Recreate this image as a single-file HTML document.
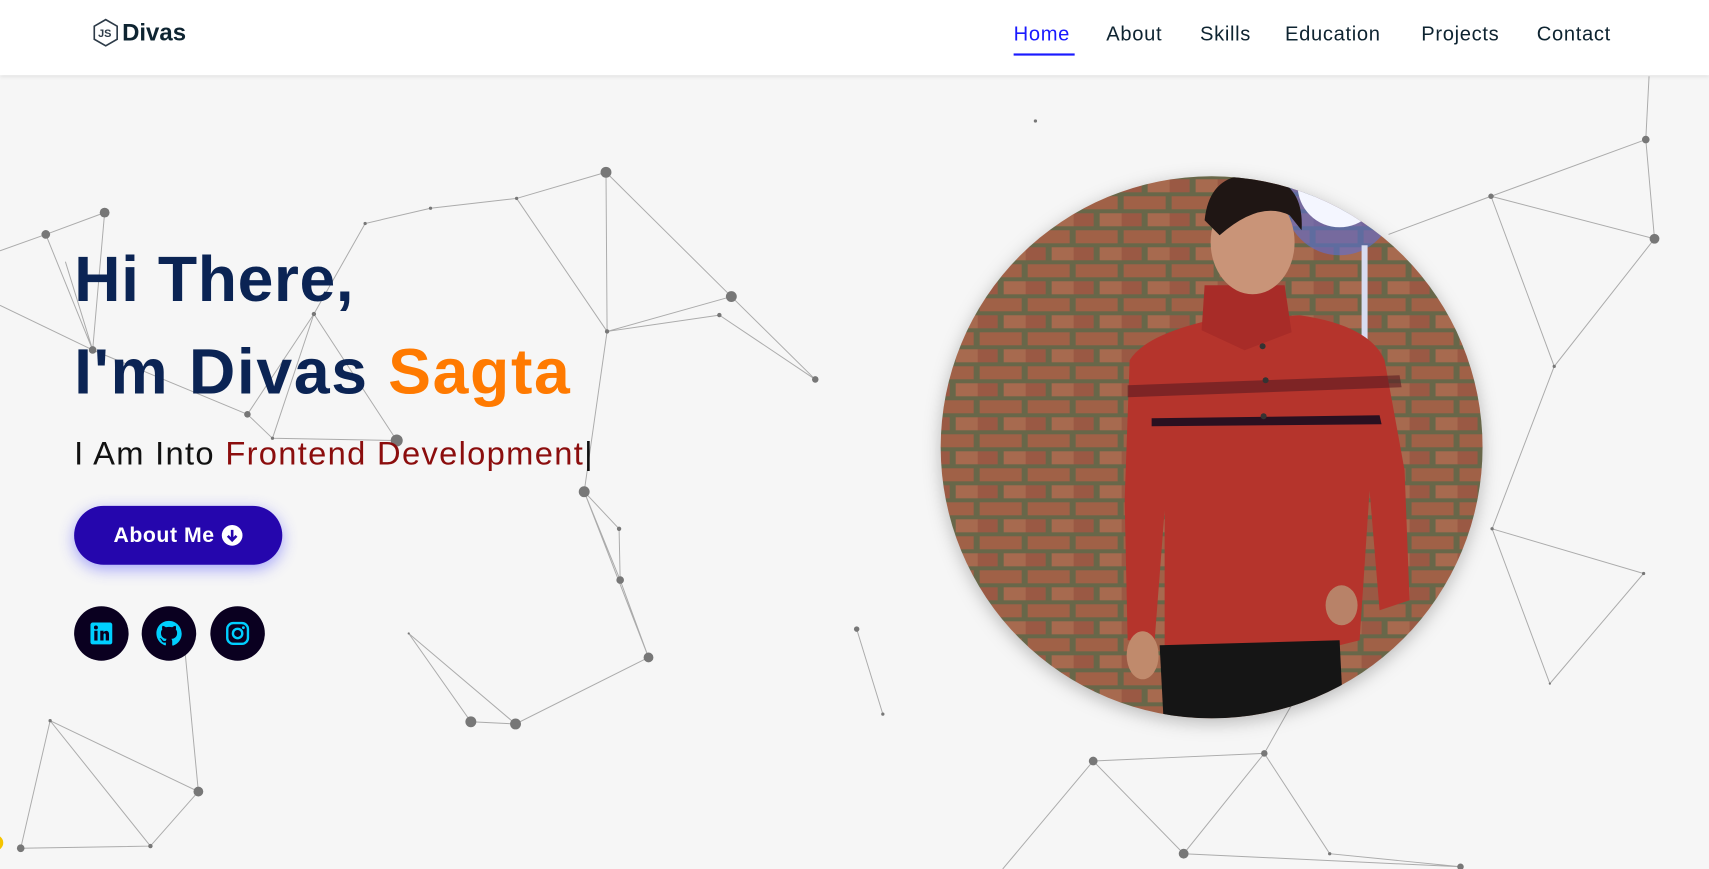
<!DOCTYPE html>
<html><head><meta charset="utf-8">
<style>
*{margin:0;padding:0;box-sizing:border-box}
html,body{width:1709px;height:869px;overflow:hidden;background:#f6f6f6;font-family:"Liberation Sans",sans-serif}
#w{position:absolute;left:0;top:0;width:1568px;height:797px;transform:scale(1.08992,1.0903);transform-origin:0 0;background:#f6f6f6}
nav{position:absolute;left:0;top:0;width:1568px;height:69px;background:#fff;box-shadow:0 1px 4px rgba(0,0,0,.1);z-index:3}
.logo{position:absolute;left:85px;top:17px;display:flex;align-items:center;font-weight:bold;font-size:22px;color:#0e2431}
.logo svg{margin-right:3px}
.menu{position:absolute;top:20px;left:0;font-size:18.5px;color:#0e2431;letter-spacing:.6px}
.menu span{position:absolute;white-space:nowrap}
.menu .act{color:#1a1aff}
.ul{position:absolute;left:930px;top:49px;width:56px;height:2px;background:#1a1aff}
h1{position:absolute;left:68px;font-size:59px;font-weight:bold;color:#0b2454;white-space:nowrap;letter-spacing:.5px}
.sub{position:absolute;left:68px;top:400px;font-size:30px;color:#111;white-space:nowrap;letter-spacing:1.2px}
.sub b{font-weight:normal;color:#8b0d0d}
.btn{position:absolute;left:68px;top:464px;width:191px;height:54px;border-radius:27px;background:#2506ad;box-shadow:0 4px 14px rgba(60,60,255,.45);color:#fff;font-weight:bold;font-size:19.5px;display:flex;align-items:center;justify-content:center;letter-spacing:.5px}
.ic{position:absolute;top:556px;width:50px;height:50px;border-radius:50%;background:#0a0020;display:flex;align-items:center;justify-content:center}
#bg{position:absolute;left:0;top:0}
</style></head><body>
<div id="w">
<svg id="bg" width="1568" height="797" viewBox="0 0 1568 797">
<g stroke="#999" stroke-width=".9" fill="none" opacity=".8">
<path d="M556 158L474 182L395 191L335 205L288 288M96 195L42 215L0 230M42 215L85 321M96 195L85 321M556 158L557 304L671 272M557 304L660 289L748 348M671 272L748 348M474 182L557 304M556 158L671 272M288 288L227 380L250 402L364 404L288 288M250 402L288 288M536 451L568 485L569 532L595 603L536 451M536 451L569 532M557 304L536 451M595 603L473 664L432 662L375 581L473 664M786 577L810 655M46 661L182 726L138 776L19 778L46 661L138 776M182 726L170 600M1003 698L1086 783L1160 691L1220 783L1340 795M1003 698L1160 691M1086 783L1340 795M1160 691L1200 620M1510 128L1518 219L1368 180L1510 128M1368 180L1426 336L1518 219M1426 336L1369 485L1508 526L1422 627L1369 485M1510 128L1513 70M1274 215L1368 180M1003 698L920 797M0 280L85 321L60 240M85 321L227 380"/>
</g>
<g fill="#777">
<circle cx="556" cy="158" r="5"/><circle cx="474" cy="182" r="1.5"/><circle cx="395" cy="191" r="1.5"/><circle cx="335" cy="205" r="1.5"/><circle cx="96" cy="195" r="4.5"/><circle cx="42" cy="215" r="4"/><circle cx="85" cy="321" r="3.5"/><circle cx="288" cy="288" r="2"/><circle cx="227" cy="380" r="3"/><circle cx="250" cy="402" r="1.5"/><circle cx="364" cy="404" r="5.5"/><circle cx="671" cy="272" r="5"/><circle cx="660" cy="289" r="2"/><circle cx="557" cy="304" r="2"/><circle cx="748" cy="348" r="3"/><circle cx="536" cy="451" r="5"/><circle cx="568" cy="485" r="2"/><circle cx="569" cy="532" r="3.5"/><circle cx="595" cy="603" r="4.5"/><circle cx="432" cy="662" r="5"/><circle cx="473" cy="664" r="5"/><circle cx="375" cy="581" r="1"/><circle cx="786" cy="577" r="2.5"/><circle cx="810" cy="655" r="1.5"/><circle cx="46" cy="661" r="1.5"/><circle cx="182" cy="726" r="4.5"/><circle cx="138" cy="776" r="2"/><circle cx="19" cy="778" r="3.5"/><circle cx="1003" cy="698" r="4"/><circle cx="1160" cy="691" r="3"/><circle cx="1086" cy="783" r="4.5"/><circle cx="1220" cy="783" r="1.5"/><circle cx="950" cy="111" r="1.5"/><circle cx="1510" cy="128" r="3.5"/><circle cx="1518" cy="219" r="4.5"/><circle cx="1368" cy="180" r="2.5"/><circle cx="1426" cy="336" r="1.5"/><circle cx="1369" cy="485" r="1.5"/><circle cx="1508" cy="526" r="1.5"/><circle cx="1422" cy="627" r="1"/><circle cx="1340" cy="795" r="3"/>
</g>
<circle cx="-4" cy="773" r="7" fill="#f5c400"/>
</svg>

<nav>
<div class="logo"><svg width="24" height="26" viewBox="0 0 24 26"><path d="M12 1L22.5 7V19L12 25L1.5 19V7Z" fill="none" stroke="#2d3b48" stroke-width="1.5"/><text x="5" y="17" font-size="10" font-family="Liberation Sans" fill="#2d3b48">JS</text></svg>Divas</div>
<div class="menu">
<span class="act" style="left:930px">Home</span>
<span style="left:1015px">About</span>
<span style="left:1101px">Skills</span>
<span style="left:1179px">Education</span>
<span style="left:1304px">Projects</span>
<span style="left:1410px">Contact</span>
</div>
<div class="ul"></div>
</nav>

<h1 style="top:222px">Hi There,</h1>
<h1 style="top:307px;letter-spacing:1.5px">I'm Divas <span style="color:#ff7a00">Sagta</span></h1>
<div class="sub">I Am Into <b>Frontend Development</b>|</div>
<div class="btn">About Me&nbsp;<svg width="20" height="20" viewBox="0 0 20 20"><circle cx="10" cy="10" r="9.5" fill="#fff"/><path d="M10 5V14M6 10.5L10 14.5L14 10.5" stroke="#2506ad" stroke-width="2.4" fill="none"/></svg></div>

<div class="ic" style="left:68px"><svg width="22" height="22" viewBox="0 0 22 22"><rect x="1" y="1" width="20" height="20" rx="2" fill="#00cfff"/><rect x="4.5" y="8.5" width="3" height="9" fill="#0a0020"/><circle cx="6" cy="5.5" r="1.8" fill="#0a0020"/><path d="M10 8.5H13V10C14 8 18 7.8 18 11.5V17.5H15V12.2C15 10.5 13 10.5 13 12.2V17.5H10Z" fill="#0a0020"/></svg></div>
<div class="ic" style="left:130px"><svg width="24" height="24" viewBox="0 0 24 24"><path fill="#00cfff" d="M12 .5C5.6.5.5 5.6.5 12c0 5.1 3.3 9.4 7.9 10.9.6.1.8-.3.8-.6v-2c-3.2.7-3.9-1.5-3.9-1.5-.5-1.3-1.3-1.7-1.3-1.7-1-.7.1-.7.1-.7 1.2.1 1.8 1.2 1.8 1.2 1 1.8 2.7 1.3 3.4 1 .1-.8.4-1.3.7-1.6-2.6-.3-5.3-1.3-5.3-5.7 0-1.3.5-2.3 1.2-3.1-.1-.3-.5-1.5.1-3.1 0 0 1-.3 3.2 1.2a11 11 0 0 1 5.8 0c2.2-1.5 3.2-1.2 3.2-1.2.6 1.6.2 2.8.1 3.1.7.8 1.2 1.9 1.2 3.1 0 4.4-2.7 5.4-5.3 5.7.4.4.8 1.1.8 2.2v3.3c0 .3.2.7.8.6 4.6-1.5 7.9-5.8 7.9-10.9C23.5 5.6 18.4.5 12 .5z"/></svg></div>
<div class="ic" style="left:193px"><svg width="22" height="22" viewBox="0 0 22 22"><rect x="1.5" y="1.5" width="19" height="19" rx="5.5" fill="none" stroke="#00cfff" stroke-width="2.2"/><circle cx="11" cy="11" r="4.3" fill="none" stroke="#00cfff" stroke-width="2.2"/><circle cx="16.3" cy="5.7" r="1.3" fill="#00cfff"/></svg></div>

<svg style="position:absolute;left:853px;top:147px;filter:drop-shadow(0 4px 8px rgba(0,0,0,.25))" width="532" height="532" viewBox="0 0 580 580">
<defs>
<clipPath id="c"><circle cx="282" cy="287" r="271"/></clipPath>
<pattern id="br" width="48" height="34" patternUnits="userSpaceOnUse">
<rect width="48" height="34" fill="#6e6a4e"/>
<rect x="2" y="2" width="42" height="13" fill="#b0634c"/>
<rect x="-22" y="19" width="42" height="13" fill="#a85a48"/>
<rect x="26" y="19" width="42" height="13" fill="#b86e55"/>
</pattern>
</defs>
<g clip-path="url(#c)">
<rect width="580" height="580" fill="url(#br)"/>
<rect width="580" height="580" fill="#4a5a30" opacity=".15"/>
<circle cx="410" cy="40" r="55" fill="#5a70d8" opacity=".6"/>
<circle cx="410" cy="25" r="42" fill="#f4f6ff"/>
<rect x="432" y="85" width="6" height="95" fill="#d8dcf0"/>
<path d="M200 200Q215 175 280 160L370 155Q440 165 455 200L475 310L480 440L450 450L440 330L430 480L410 485L235 490L235 350L225 480L198 480L195 340Z" fill="#b5342c"/>
<path d="M198 225L470 215L472 227L198 237Z" fill="#5a1a22" opacity=".6"/>
<path d="M222 258L450 255L452 264L222 266Z" fill="#2a1020"/>
<path d="M275 125L355 125L362 172L315 190L272 170Z" fill="#a82c28"/>
<ellipse cx="323" cy="82" rx="42" ry="52" fill="#c99478"/>
<path d="M275 60Q280 10 330 15Q375 20 372 70L360 55Q330 40 290 75Z" fill="#1f1614"/>
<path d="M230 485L410 480L415 580L235 580Z" fill="#151515"/>
<ellipse cx="213" cy="495" rx="16" ry="24" fill="#c08a6c"/>
<ellipse cx="412" cy="445" rx="16" ry="20" fill="#b88268"/>
<circle cx="333" cy="186" r="3" fill="#333"/><circle cx="336" cy="220" r="3" fill="#333"/><circle cx="334" cy="256" r="3" fill="#333"/>
</g>
</svg>
</div>
</body></html>
